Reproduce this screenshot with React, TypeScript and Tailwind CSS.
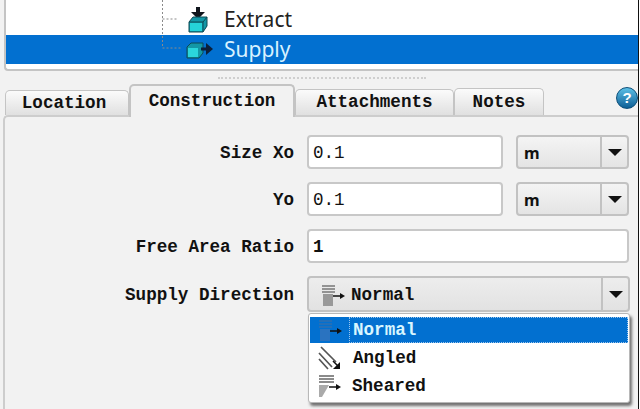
import React from "react";

const mono = { fontFamily: '"Liberation Mono", monospace' };

const Caret = () => (
    <svg width="14" height="7" viewBox="0 0 14 7"><path d="M0 0H14L7 7Z" fill="#111" /></svg>
);

const NormalIcon = ({ dark }: { dark?: boolean }) => (
    <svg width="24" height="24" viewBox="0 0 24 24">
        <path d="M1 3h13M1 6h13M1 9h13" stroke={dark ? "#2f6fb0" : "#777"} strokeWidth="1.5" />
        <rect x="2" y="11" width="10" height="12" fill={dark ? "#2a73c0" : "#999"} />
        <path d="M12 13h8" stroke="#111" strokeWidth="1.5" />
        <path d="M19 10l5 3-5 3z" fill="#111" />
    </svg>
);

const AngledIcon = () => (
    <svg width="24" height="24" viewBox="0 0 24 24">
        <path d="M3 1l15 15M1 7l13 14M1 13l9 10" stroke="#555" strokeWidth="1.7" />
        <path d="M15 15l6 6" stroke="#111" strokeWidth="1.5" />
        <path d="M22 16v7h-7z" fill="#111" />
    </svg>
);

const ShearedIcon = () => (
    <svg width="24" height="24" viewBox="0 0 24 24">
        <path d="M2 2h15M2 5h15M2 8h15" stroke="#666" strokeWidth="1.5" />
        <path d="M2 11h10L5 23H2z" fill="#aaa" />
        <path d="M12 13h8" stroke="#111" strokeWidth="1.5" />
        <path d="M19 10l5 3-5 3z" fill="#111" />
    </svg>
);

const ExtractIcon = () => (
    <svg width="22" height="26" viewBox="0 0 22 26">
        <path d="M9 0h4v5h5l-7 7-7-7h5z" fill="#10151c" />
        <path d="M2 15l4-5h14v9l-4 6H2z" fill="#1397a6" stroke="#0c4a55" strokeWidth="1" />
        <path d="M3 16h12v8H3z" fill="#25d3d8" />
        <path d="M2 15h14l4-5M16 15v10" stroke="#0c4a55" fill="none" />
    </svg>
);

const SupplyIcon = () => (
    <svg width="28" height="18" viewBox="0 0 28 18">
        <path d="M1 6l4-4h12v10l-4 5H1z" fill="#1397a6" stroke="#0c4a55" strokeWidth="1" />
        <path d="M2 7h10v9H2z" fill="#2bd6dc" />
        <path d="M15 8h6" stroke="#0b1f3a" strokeWidth="3" />
        <path d="M20 2l7 6-7 6z" fill="#0b1f3a" />
    </svg>
);

const Tab = ({ label, className }: { label: string; className: string }) => (
    <div
        className={"flex items-center justify-center border border-b-0 border-[#c4c4c4] rounded-t-[5px] " + className}
    >
        {label}
    </div>
);

const Input = ({ value, className }: { value: string; className: string }) => (
    <div className={"h-[34px] flex items-center pl-[4px] pt-[2px] bg-white border-2 border-[#c8c8c8] rounded-[4px] " + className}>
        {value}
    </div>
);

const UnitSelect = () => (
    <div className="w-[113px] h-[34px] flex border-2 border-[#c2c2c2] rounded-[4px] bg-gradient-to-b from-[#f4f4f4] to-[#e4e4e4]">
        <div className="flex-1 flex items-center pl-[6px] font-bold text-[16px] pt-[2px]" style={{ fontFamily: '"Noto Sans", sans-serif' }}>m</div>
        <div className="w-[27px] flex items-center justify-center border-l-2 border-[#c2c2c2]"><Caret /></div>
    </div>
);

const Row = ({ label, children }: { label: string; children: React.ReactNode }) => (
    <div className="flex items-center">
        <div className="w-[294px] text-right pt-[2px]">{label}</div>
        <div className="ml-[13px] flex gap-[13px]">{children}</div>
    </div>
);

export default function App() {
    return (
        <div className="relative w-[640px] h-[409px] overflow-hidden bg-[#f2f2f2] text-[#111]" style={mono}>
            {/* tree */}
            <div className="ml-[4px] w-[634px] h-[71px] bg-white border-l-2 border-b-2 border-[#c4c4c4] rounded-bl-[4px] pt-[5px]" style={{ fontFamily: '"Noto Sans", sans-serif' }}>
                <div className="relative h-[30px] flex items-center pl-[181px] text-[21px] text-[#222]">
                    <ExtractIcon />
                    <span className="ml-[15px]">Extract</span>
                </div>
                <div className="relative h-[29px] flex items-center pl-[180px] text-[21px] bg-[#0270d0] text-[#d8f2ff]">
                    <SupplyIcon />
                    <span className="ml-[10px]">Supply</span>
                </div>
                <svg className="absolute left-[160px] top-0" width="24" height="52">
                    <path d="M2.5 0V48H22M2.5 19H18" stroke="#8a8a8a" fill="none" strokeDasharray="2 2" />
                </svg>
            </div>

            {/* splitter */}
            <div className="h-[6px] mt-[6px] ml-[218px] w-[208px] border-t-2 border-dotted border-[#cfcfcf]" />

            {/* tabs */}
            <div className="flex items-end h-[32px] ml-[5px] text-[17.6px] font-bold relative z-10">
                <Tab label="Location" className="w-[124px] h-[25px] pr-[6px] bg-gradient-to-b from-[#fbfbfb] to-[#e0e0e0]" />
                <Tab label="Construction" className="w-[166px] h-[33px] mb-[-2px] bg-[#f2f2f2] border-2 border-b-0" />
                <Tab label="Attachments" className="w-[159px] h-[26px] bg-gradient-to-b from-[#fbfbfb] to-[#e0e0e0]" />
                <Tab label="Notes" className="w-[90px] h-[27px] bg-gradient-to-b from-[#fbfbfb] to-[#e0e0e0]" />
            </div>
            <div
                className="absolute left-[616px] top-[87px] w-[22px] h-[22px] rounded-full border border-[#0d4f7a] bg-gradient-to-b from-[#5cc0e6] to-[#0a5f96] text-white text-[15px] font-bold flex items-center justify-center"
                style={{ fontFamily: '"Liberation Sans", sans-serif' }}
            >
                ?
            </div>

            {/* form */}
            <div className="ml-[3px] border-t-2 border-l-2 border-[#cdcdcd] rounded-tl-[5px] h-[300px]">
                <div className="-ml-[5px] pt-[18px] flex flex-col gap-[13px] text-[17.6px] font-bold">
                    <Row label="Size Xo">
                        <Input value="0.1" className="w-[196px] font-normal" />
                        <UnitSelect />
                    </Row>
                    <Row label="Yo">
                        <Input value="0.1" className="w-[196px] font-normal" />
                        <UnitSelect />
                    </Row>
                    <Row label="Free Area Ratio">
                        <Input value="1" className="w-[322px]" />
                    </Row>
                    <Row label="Supply Direction">
                        <div className="w-[323px] h-[36px] flex border-2 border-[#c2c2c2] rounded-[4px] bg-gradient-to-b from-[#ededed] to-[#e2e2e2]">
                            <div className="flex-1 flex items-center pl-[12px] gap-[6px] pt-[2px]">
                                <NormalIcon />
                                Normal
                            </div>
                            <div className="w-[27px] flex items-center justify-center border-l-2 border-[#c2c2c2]"><Caret /></div>
                        </div>
                    </Row>
                </div>
            </div>

            {/* open dropdown */}
            <div className="absolute left-[308px] top-[313px] w-[322px] h-[90px] bg-white border border-[#b8b8b8] rounded-[3px] shadow-[2px_3px_3px_rgba(70,70,70,0.75)] pt-[3px] px-[1px] text-[17.6px] font-bold">
                <div className="h-[26px] flex items-center bg-[#0270d0] text-[#d8f6ff]">
                    <div className="w-[39px] pl-[8px] flex"><NormalIcon dark /></div>
                    <span className="h-full flex items-center pl-[3px] flex-1 border border-dotted border-[#9cc6ee]">Normal</span>
                </div>
                <div className="h-[28px] flex items-center pt-[2px]">
                    <div className="w-[43px] pl-[8px] flex"><AngledIcon /></div>
                    Angled
                </div>
                <div className="h-[28px] flex items-center pt-[2px]">
                    <div className="w-[42px] pl-[7px] flex"><ShearedIcon /></div>
                    Sheared
                </div>
            </div>

            {/* dark edge of the captured window */}
            <div className="absolute right-0 top-0 bottom-0 w-[2px] bg-white border-l border-[#111]" />
        </div>
    );
}
